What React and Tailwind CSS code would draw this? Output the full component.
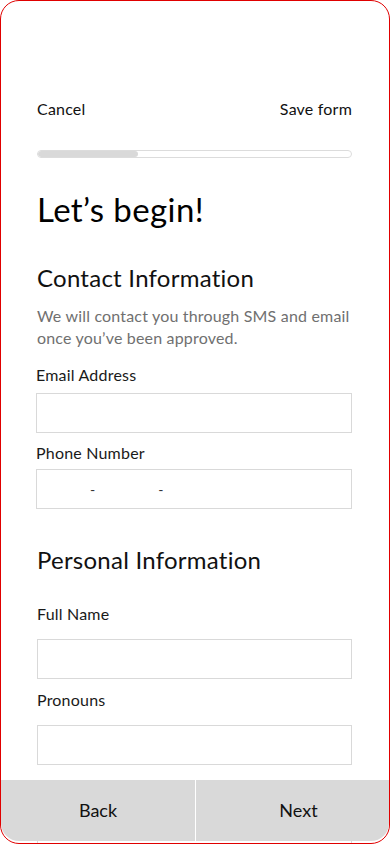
import React from 'react'

const font = { fontFamily: 'Lato, "Open Sans", sans-serif' }

function Field({ label, labelClass, inputClass, children }) {
  return (
    <div>
      <p className={`text-[16px] leading-[20px] tracking-[0.2px] text-[#1a1a1a] ${labelClass}`}>{label}</p>
      <div className={`h-[40px] border border-[#d9d9d9] bg-white ${inputClass}`}>{children}</div>
    </div>
  )
}

export default function App() {
  return (
    <div className="w-[390px] h-[844px] bg-white" style={font}>
      <div className="relative w-full h-full border border-[#e00000] rounded-[19px] overflow-hidden bg-white">
        {/* Scrolling form content */}
        <div className="pl-[36px] pr-[37px] pt-[96px]">
          <div className="flex justify-between text-[16px] leading-[24px] tracking-[0.2px] text-[#111]">
            <span>Cancel</span>
            <span>Save form</span>
          </div>

          <div className="mt-[29px] h-[8px] rounded-full border border-[#dcdcdc] overflow-hidden">
            <div className="h-full w-[100px] bg-[#d9d9d9] rounded-full"></div>
          </div>

          <h1 className="mt-[31px] text-[33px] leading-[40px] tracking-[0.4px] text-black">Let’s begin!</h1>

          <h2 className="mt-[33px] text-[24px] leading-[32px] tracking-[0.25px] text-[#111]">Contact Information</h2>
          <p className="mt-[11px] text-[16px] leading-[22px] tracking-[0.18px] text-[#707070]">
            We will contact you through SMS and email once you’ve been approved.
          </p>

          <div className="-ml-px">
            <Field label="Email Address" labelClass="mt-[16px]" inputClass="mt-[8px]" />
            <Field label="Phone Number" labelClass="mt-[10px]" inputClass="mt-[6px] flex items-center text-[14px] text-[#333]">
              <span className="ml-[53px]">-</span>
              <span className="ml-[63px]">-</span>
            </Field>
          </div>

          <h2 className="mt-[35px] text-[24px] leading-[32px] tracking-[0.25px] text-[#111]">Personal Information</h2>

          <Field label="Full Name" labelClass="mt-[28px]" inputClass="mt-[15px]" />
          <Field label="Pronouns" labelClass="mt-[11px]" inputClass="mt-[15px]" />
          <Field label="Date of Birth" labelClass="mt-[11px]" inputClass="mt-[15px]" />
        </div>

        {/* Bottom action bar */}
        <div className="absolute left-0 right-0 bottom-[2px] h-[61px] flex bg-[#d9d9d9] text-[18px] text-[#111] rounded-b-[18px]">
          <button className="w-[194px] flex items-center justify-center">Back</button>
          <div className="w-px bg-white"></div>
          <button className="flex-1 flex items-center justify-center pl-[12px]">Next</button>
        </div>
      </div>
    </div>
  )
}
